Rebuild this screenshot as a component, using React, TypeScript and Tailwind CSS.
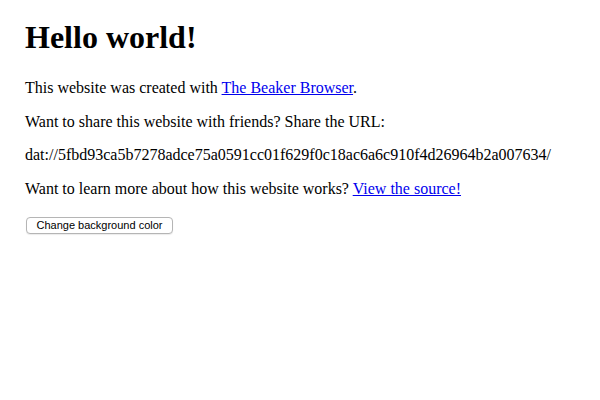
export default function App() {
  return (
    <div className="min-h-[400px] bg-white px-[25px] pt-[19px] font-['Liberation_Serif',serif] text-[16px] text-black">
      <h1 className="mb-[23px] text-[32px] font-bold leading-[37px]">Hello world!</h1>
      <p className="mb-4 leading-[17.5px]">
        This website was created with{" "}
        <a href="#" className="text-[#0000ee] underline">
          The Beaker Browser
        </a>
        .
      </p>
      <p className="mb-4 leading-[17.5px]">Want to share this website with friends? Share the URL:</p>
      <p className="mb-4 leading-[17.5px]">
        dat://5fbd93ca5b7278adce75a0591cc01f629f0c18ac6a6c910f4d26964b2a007634/
      </p>
      <p className="mb-[19.5px] leading-[17.5px]">
        Want to learn more about how this website works?{" "}
        <a href="#" className="text-[#0000ee] underline">
          View the source!
        </a>
      </p>
      <button
        type="button"
        className="ml-px block h-[17px] rounded-[4px] border border-[#b5b5b5] bg-white px-[9.5px] font-['Liberation_Sans',sans-serif] text-[11px] leading-[15px] text-black shadow-[0_1px_1px_rgba(0,0,0,0.08)]"
      >
        Change background color
      </button>
    </div>
  );
}
